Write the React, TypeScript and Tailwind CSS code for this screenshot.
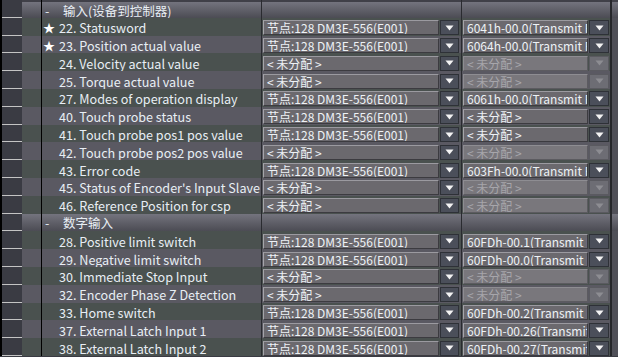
import React from "react";

type Dd = { text: string; disabled?: boolean };
type Row =
  | { kind: "header"; title: string; first?: boolean }
  | { kind: "item"; star?: boolean; name: string; a: Dd; b: Dd };

const NODE = "节点:128 DM3E-556(E001)";
const UN = "< 未分配 >";

const rows: Row[] = [
  { kind: "header", title: "输入(设备到控制器)", first: true },
  { kind: "item", star: true, name: "22. Statusword", a: { text: NODE }, b: { text: "6041h-00.0(Transmit PDO Mapping)" } },
  { kind: "item", star: true, name: "23. Position actual value", a: { text: NODE }, b: { text: "6064h-00.0(Transmit PDO Mapping)" } },
  { kind: "item", name: "24. Velocity actual value", a: { text: UN }, b: { text: UN, disabled: true } },
  { kind: "item", name: "25. Torque actual value", a: { text: UN }, b: { text: UN, disabled: true } },
  { kind: "item", name: "27. Modes of operation display", a: { text: NODE }, b: { text: "6061h-00.0(Transmit PDO Mapping)" } },
  { kind: "item", name: "40. Touch probe status", a: { text: NODE }, b: { text: UN } },
  { kind: "item", name: "41. Touch probe pos1 pos value", a: { text: NODE }, b: { text: UN } },
  { kind: "item", name: "42. Touch probe pos2 pos value", a: { text: UN }, b: { text: UN, disabled: true } },
  { kind: "item", name: "43. Error code", a: { text: NODE }, b: { text: "603Fh-00.0(Transmit PDO Mapping)" } },
  { kind: "item", name: "45. Status of Encoder's Input Slave", a: { text: UN }, b: { text: UN, disabled: true } },
  { kind: "item", name: "46. Reference Position for csp", a: { text: UN }, b: { text: UN, disabled: true } },
  { kind: "header", title: "数字输入" },
  { kind: "item", name: "28. Positive limit switch", a: { text: NODE }, b: { text: "60FDh-00.1(Transmit PDO Mapping)" } },
  { kind: "item", name: "29. Negative limit switch", a: { text: NODE }, b: { text: "60FDh-00.0(Transmit PDO Mapping)" } },
  { kind: "item", name: "30. Immediate Stop Input", a: { text: UN }, b: { text: UN, disabled: true } },
  { kind: "item", name: "32. Encoder Phase Z Detection", a: { text: UN }, b: { text: UN, disabled: true } },
  { kind: "item", name: "33. Home switch", a: { text: NODE }, b: { text: "60FDh-00.2(Transmit PDO Mapping)" } },
  { kind: "item", name: "37. External Latch Input 1", a: { text: NODE }, b: { text: "60FDh-00.26(Transmit PDO Mapping)" } },
  { kind: "item", name: "38. External Latch Input 2", a: { text: NODE }, b: { text: "60FDh-00.27(Transmit PDO Mapping)" } },
];

function Tri({ color }: { color: string }) {
  return (
    <svg width="9" height="6" viewBox="0 0 9 6">
      <path d="M0.5 0.5 L8.5 0.5 L4.5 5.5 Z" fill={color} />
    </svg>
  );
}

function Dropdown({ dd, textW }: { dd: Dd; textW: string }) {
  const dis = dd.disabled;
  return (
    <div className="flex h-[15px]">
      <div
        className={`${textW} shrink-0 h-full overflow-hidden whitespace-pre border-t border-l border-b border-r pl-[3px] text-[12px] leading-[13px] ${
          dis
            ? "bg-[#79777c] border-t-[#8e8d92] border-l-[#8e8d92] border-b-[#5c5b60] border-r-[#5c5b60] text-[#a7a6ab]"
            : "bg-[#6b696e] border-t-[#9b9aa0] border-l-[#a5a4aa] border-b-[#3c3b40] border-r-[#3c3b40] text-[#eef2f6]"
        }`}
      >
        {dd.text}
      </div>
      <div
        className={`ml-[1px] flex-1 h-full flex items-center justify-center border ${
          dis ? "bg-[#6d6d74] border-[#5a5a60]" : "bg-[#4b4f5a] border-[#2e3137]"
        }`}
      >
        <Tri color={dis ? "#8d8d92" : "#f4f4f4"} />
      </div>
    </div>
  );
}

function HeaderRow({ title, first }: { title: string; first?: boolean }) {
  const g = "bg-gradient-to-b from-[#74747e] to-[#4c4c54]";
  const cells = (
    <>
      <div className={`w-[19px] ${g}`} />
      <div className="w-[1px] bg-black" />
      <div className={`w-[219px] ${g} flex items-center pt-[2px] text-[12.5px] leading-[14px] text-[#e8eef4]`}>
        <span className="w-[21px] shrink-0 pl-[3px]">-</span>
        <span>{title}</span>
      </div>
      <div className="w-[1px] bg-[#2a2b30]" />
      <div className={`w-[199px] ${g}`} />
      <div className="w-[1px] bg-[#2a2b30]" />
      <div className={`w-[148px] ${g}`} />
      <div className="w-[2px] bg-[#26272b]" />
      <div className={`flex-1 ${g}`} />
    </>
  );
  return (
    <div className="flex h-[17.8px]">
      <div className="w-[2px] bg-black" />
      <div className="w-[20px] bg-[#3a3b43] border-b border-[#c4c4c4]" />
      {first ? (
        <div className="flex-1 flex flex-col">
          <div className="h-[3px] bg-[#404048] flex">
            <div className="w-[19px]" />
            <div className="w-[1px] bg-black" />
            <div className="w-[219px]" />
            <div className="w-[1px] bg-[#2a2b30]" />
            <div className="w-[199px]" />
            <div className="w-[1px] bg-[#2a2b30]" />
            <div className="w-[148px]" />
            <div className="w-[2px] bg-[#26272b]" />
          </div>
          <div className="flex-1 flex">{cells}</div>
        </div>
      ) : (
        cells
      )}
    </div>
  );
}

function ItemRow({ r, idx }: { r: Extract<Row, { kind: "item" }>; idx: number }) {
  const bg = idx % 2 === 0 ? "bg-[#4a514f]" : "bg-[#5a5962]";
  return (
    <div className="flex h-[17.8px]">
      <div className="w-[2px] bg-black" />
      <div className="w-[20px] bg-[#3a3b43] border-b border-[#c4c4c4]" />
      <div className={`w-[19px] ${bg}`} />
      <div className="w-[1px] bg-black" />
      <div className={`w-[219px] ${bg} flex items-center pt-[3px] text-[12.6px] leading-[14px] text-[#e8eef4] whitespace-nowrap`}>
        <span className="w-[17px] shrink-0 pl-[1px] text-[12px] text-white">{r.star ? "★" : ""}</span>
        <span>{r.name}</span>
      </div>
      <div className="w-[1px] bg-[#2a2b30]" />
      <div className={`w-[199px] ${bg} pl-[1px] pr-[2px] pt-[2.5px]`}>
        <Dropdown dd={r.a} textW="w-[176px]" />
      </div>
      <div className="w-[1px] bg-[#2a2b30]" />
      <div className={`w-[148px] ${bg} pl-[1px] pr-[1px] pt-[2.5px]`}>
        <Dropdown dd={r.b} textW="w-[125px]" />
      </div>
      <div className="w-[2px] bg-[#26272b]" />
      <div className="flex-1 bg-[#505058]" />
    </div>
  );
}

export default function App() {
  let idx = 0;
  return (
    <div
      className="w-[618px] h-[357px] overflow-hidden bg-[#3a3b43]"
      style={{ fontFamily: '"Noto Sans CJK SC", "Noto Sans", sans-serif' }}
    >
      {rows.map((r, i) => {
        if (r.kind === "header") {
          idx = 0;
          return <HeaderRow key={i} title={r.title} first={r.first} />;
        }
        const el = <ItemRow key={i} r={r} idx={idx} />;
        idx++;
        return el;
      })}
    </div>
  );
}
